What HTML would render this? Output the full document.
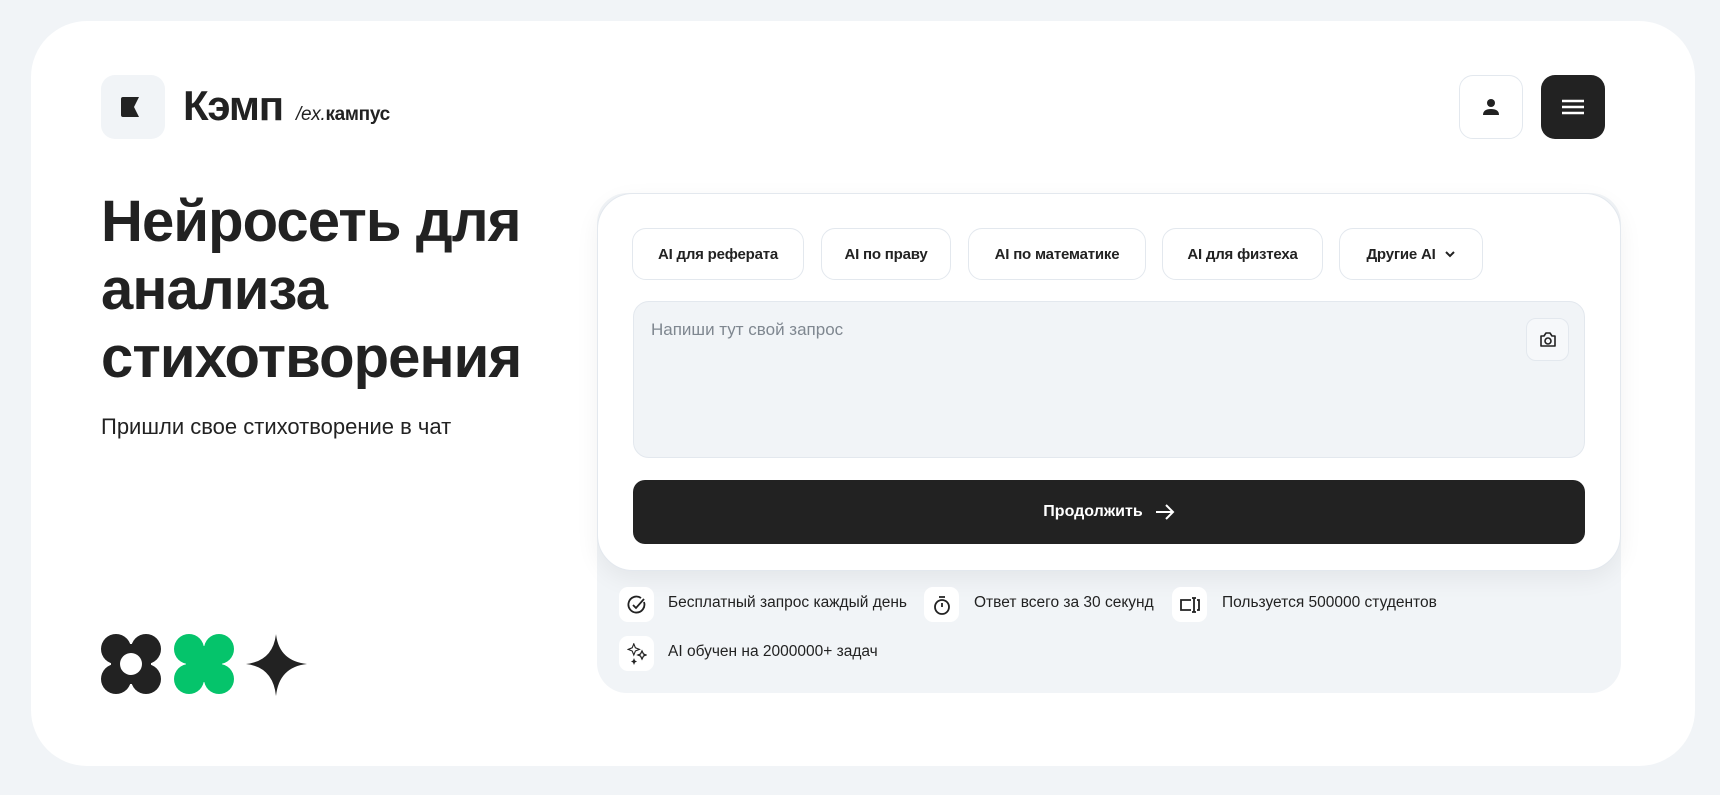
<!DOCTYPE html>
<html><head><meta charset="utf-8"><style>
*{box-sizing:border-box;margin:0;padding:0}
body{width:1720px;height:795px;background:#f1f4f7;font-family:"Liberation Sans",sans-serif;color:#222;position:relative;overflow:hidden}
.outer{position:absolute;left:31px;top:21px;width:1664px;height:745px;background:#fff;border-radius:56px}
.abs{position:absolute}
.logo{left:101px;top:75px;width:64px;height:64px;background:#f1f4f7;border-radius:14px}
.btn{width:64px;height:64px;border-radius:14px;display:flex;align-items:center;justify-content:center}
h1{position:absolute;left:101px;top:188px;font-size:58px;line-height:68px;font-weight:700;letter-spacing:-0.9px}
.sub{left:101px;top:414px;font-size:22px}
.panel{left:597px;top:193px;width:1024px;height:500px;background:#f1f4f7;border-radius:30px}
.card{left:597px;top:193px;width:1024px;height:378px;background:#fff;border-radius:36px;border:1px solid #e3e8ee;box-shadow:0 8px 24px rgba(0,0,0,.06)}
.tab{top:228px;height:52px;border:1px solid #e3e8ee;border-radius:14px;background:#fff;display:flex;align-items:center;justify-content:center;font-size:15px;font-weight:700;letter-spacing:-.2px}
.ta{left:633px;top:301px;width:952px;height:157px;background:#f1f4f7;border:1px solid #e3e8ee;border-radius:16px}
.ph{left:651px;top:320px;font-size:17px;color:#7f8790}
.cam{left:1526px;top:318px;width:43px;height:43px;border:1px solid #e3e8ee;border-radius:10px;background:#f6f8fa;display:flex;align-items:center;justify-content:center}
.go{left:633px;top:480px;width:952px;height:64px;background:#222;border-radius:12px;color:#fff;font-weight:700;font-size:16px;display:flex;align-items:center;justify-content:center;gap:12px}
.fi{width:35px;height:35px;background:#fff;border-radius:9px;display:flex;align-items:center;justify-content:center}
.ft{font-size:15.5px;letter-spacing:0}
</style></head><body>
<div class="outer"></div>
<div class="abs logo"><svg class="abs" style="left:20px;top:22px" width="22" height="20" viewBox="0 0 22 20"><path d="M2 0H18L13 10L18 20H2Q0 20 0 18V2Q0 0 2 0Z" fill="#222"/></svg></div>
<div class="abs" style="left:183px;top:82px;font-size:42px;font-weight:700;letter-spacing:-1.2px">Кэмп</div>
<div class="abs" style="left:296px;top:104px;font-size:19px;letter-spacing:-.3px"><span style="font-style:italic">/ex.</span><b style="font-weight:600">кампус</b></div>
<div class="abs btn" style="left:1459px;top:75px;border:1px solid #e3e8ee"><svg width="20" height="20" viewBox="0 0 20 20"><circle cx="10" cy="6" r="4" fill="#222"/><path d="M2 18Q2 12 10 12Q18 12 18 18Z" fill="#222"/></svg></div>
<div class="abs btn" style="left:1541px;top:75px;background:#222"><svg width="22" height="16" viewBox="0 0 22 16"><path d="M0 2H22M0 8H22M0 14H22" stroke="#fff" stroke-width="2.4"/></svg></div>
<h1>Нейросеть для<br>анализа<br>стихотворения</h1>
<div class="abs sub">Пришли свое стихотворение в чат</div>
<svg class="abs" style="left:101px;top:634px" width="210" height="62" viewBox="0 0 210 62">
<g fill="#222"><circle cx="15" cy="15" r="15"/><circle cx="45" cy="15" r="15"/><circle cx="15" cy="45" r="15"/><circle cx="45" cy="45" r="15"/><rect x="10" y="10" width="40" height="40"/></g><circle cx="30" cy="30" r="11" fill="#fff"/>
<g fill="#05c46b"><circle cx="88" cy="15" r="15"/><circle cx="118" cy="15" r="15"/><circle cx="88" cy="45" r="15"/><circle cx="118" cy="45" r="15"/><rect x="85" y="12" width="36" height="36"/></g>
<path d="M175 0Q178 27 206 30Q178 33 175 62Q172 33 145 30Q172 27 175 0Z" fill="#222"/>
</svg>
<div class="abs panel"></div>
<div class="abs card"></div>
<div class="abs tab" style="left:632px;width:172px">AI для реферата</div>
<div class="abs tab" style="left:821px;width:130px">AI по праву</div>
<div class="abs tab" style="left:968px;width:178px">AI по математике</div>
<div class="abs tab" style="left:1162px;width:161px">AI для физтеха</div>
<div class="abs tab" style="left:1339px;width:144px">Другие AI&nbsp;&nbsp;<svg width="12" height="8" viewBox="0 0 12 8"><path d="M2 2L6 6L10 2" stroke="#222" stroke-width="2" fill="none"/></svg></div>
<div class="abs ta"></div>
<div class="abs ph">Напиши тут свой запрос</div>
<div class="abs cam"><svg width="18" height="16" viewBox="0 0 18 16"><path d="M2 4H5L7 1H11L13 4H16V14H2Z" stroke="#222" stroke-width="1.6" fill="none" stroke-linejoin="round"/><circle cx="9" cy="9" r="3" stroke="#222" stroke-width="1.6" fill="none"/></svg></div>
<div class="abs go">Продолжить <svg width="20" height="18" viewBox="0 0 20 18"><path d="M1 9H18M11 2L18 9L11 16" stroke="#fff" stroke-width="2" fill="none"/></svg></div>
<div class="abs fi" style="left:619px;top:587px"><svg width="20" height="20" viewBox="0 0 20 20"><path d="M17 7A8 8 0 1 1 14 3" stroke="#222" stroke-width="1.8" fill="none"/><path d="M6 10L9 13L17 4" stroke="#222" stroke-width="1.8" fill="none"/></svg></div>
<div class="abs ft" style="left:668px;top:594px">Бесплатный запрос каждый день</div>
<div class="abs fi" style="left:924px;top:587px"><svg width="18" height="20" viewBox="0 0 18 20"><circle cx="9" cy="12" r="7" stroke="#222" stroke-width="1.8" fill="none"/><path d="M6 2H12M9 12V8" stroke="#222" stroke-width="1.8"/></svg></div>
<div class="abs ft" style="left:974px;top:594px">Ответ всего за 30 секунд</div>
<div class="abs fi" style="left:1172px;top:587px"><svg width="22" height="20" viewBox="0 0 22 20"><path d="M12 5H2V15H12M15 3V17M13 3H17M13 17H17M18 5H20V15H18" stroke="#222" stroke-width="1.8" fill="none"/></svg></div>
<div class="abs ft" style="left:1222px;top:594px">Пользуется 500000 студентов</div>
<div class="abs fi" style="left:619px;top:636px"><svg width="20" height="22" viewBox="0 0 20 22"><path d="M6 1L8 6L13 8L8 10L6 15L4 10L-1 8L4 6Z" transform="translate(2 0) scale(.8)" stroke="#222" stroke-width="1.4" fill="none"/><path d="M15 8L16.5 11L19 12L16.5 13L15 16L13.5 13L11 12L13.5 11Z" stroke="#222" stroke-width="1.3" fill="none"/><path d="M7 15L8 17.5L10 18.5L8 19.5L7 22L6 19.5L4 18.5L6 17.5Z" fill="#222"/></svg></div>
<div class="abs ft" style="left:668px;top:643px">AI обучен на 2000000+ задач</div>
</body></html>
